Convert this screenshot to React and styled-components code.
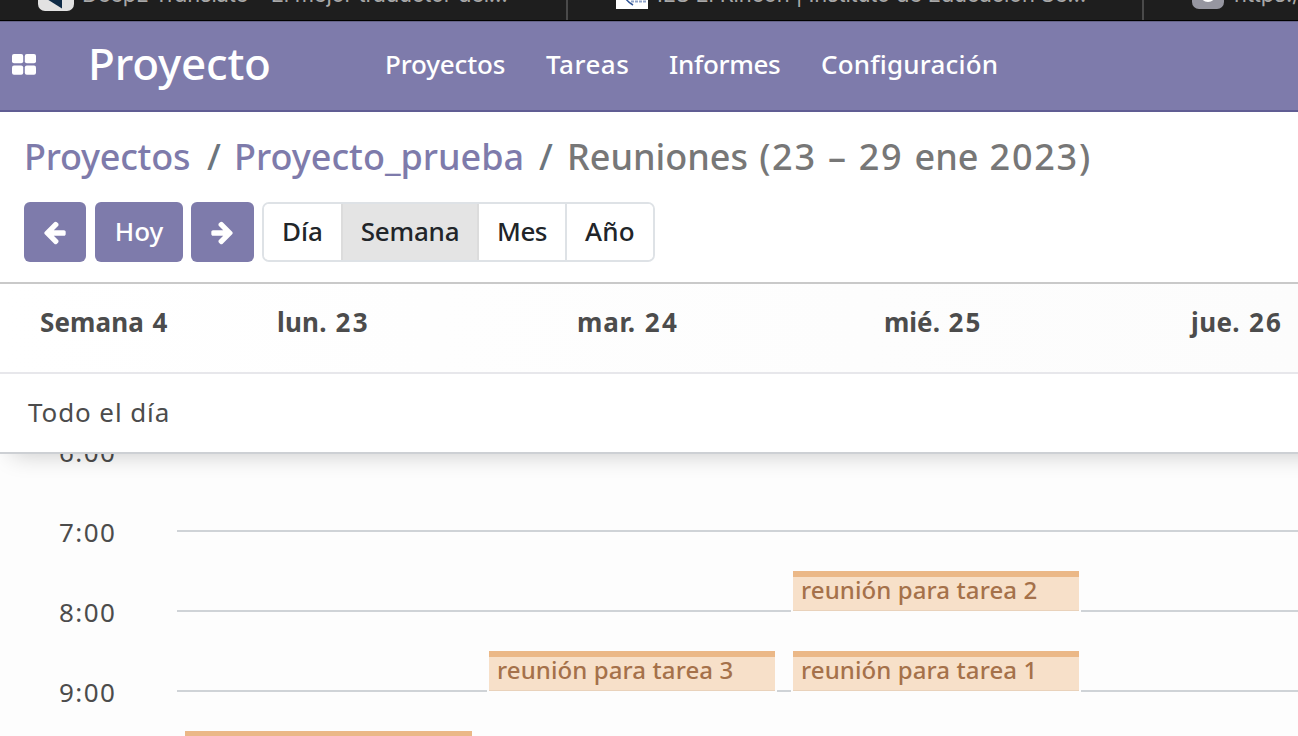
import React from "react";
import styled, { createGlobalStyle } from "styled-components";

const GlobalStyle = createGlobalStyle`
  *, *::before, *::after { box-sizing: border-box; }
  body { margin: 0; background: #fff; overflow: hidden; }
`;

const Screen = styled.div`
  width: 1298px;
  height: 736px;
  overflow: hidden;
  display: flex;
  flex-direction: column;
  background: #fff;
  color: #4c4c4c;
  font-family: "Lucida Grande", "Noto Sans", sans-serif;
  font-size: 26px;
  white-space: nowrap;
`;

const TabStrip = styled.div`
  display: flex;
  flex: none;
  height: 21px;
  background: #1e1e1e;
  border-bottom: 1px solid #000;
  overflow: hidden;
`;

const Tab = styled.div`
  display: flex;
  flex: none;
  align-items: flex-end;
  width: ${(p) => p.$width}px;
  height: 20px;
  padding-left: ${(p) => p.$pad}px;
  border-right: 2px solid #4a4a4a;
  overflow: hidden;
`;

const Favicon = styled.svg`
  flex: none;
  height: 32px;
  margin-bottom: ${(p) => p.$lift}px;
`;

const TabTitle = styled.span`
  margin-left: ${(p) => p.$gap}px;
  margin-bottom: 11px;
  font: 400 22px/30px Inter, sans-serif;
  letter-spacing: ${(p) => p.$track}px;
  color: #a8a8a8;
`;

const Navbar = styled.nav`
  display: flex;
  flex: none;
  align-items: center;
  height: 91px;
  padding-left: 12px;
  background: #7e7bab;
  border-top: 1px solid #66648a;
  border-bottom: 2px solid #605d93;
  color: #fff;
`;

const AppsIcon = styled.svg`
  width: 24px;
  height: 21px;
  margin-top: -4px;
`;

const Brand = styled.span`
  width: 297px;
  margin: -6px 0 0 52px;
  font-size: 44px;
  font-weight: 500;
  line-height: 60px;
  letter-spacing: ${(p) => p.$track}px;
`;

const NavLink = styled.a`
  width: ${(p) => p.$width}px;
  margin-top: -4px;
  font-weight: 500;
  line-height: 36px;
  letter-spacing: ${(p) => p.$track}px;
`;

const ControlPanel = styled.header`
  flex: none;
  height: 172px;
  padding: 20px 24px 0;
  border-bottom: 2px solid #c9c9c9;
`;

const Breadcrumb = styled.div`
  display: flex;
  height: 50px;
  line-height: 50px;
  font-size: 36px;
  font-weight: 500;
`;

const Crumb = styled.span`
  width: ${(p) => p.$width}px;
  letter-spacing: ${(p) => p.$track}px;
  color: ${(p) => p.$color};
`;

const Digits = styled.span`
  letter-spacing: ${(p) => p.$track}px;
`;

const Toolbar = styled.div`
  display: flex;
  height: 60px;
  margin-top: 20px;
`;

const NavButton = styled.button`
  display: flex;
  align-items: center;
  justify-content: center;
  width: ${(p) => p.$width}px;
  height: 60px;
  margin: 0 ${(p) => p.$gap}px 0 0;
  padding: 0 0 2px;
  border: 0;
  border-radius: 6px;
  background: #7e7bab;
  color: #fff;
  font: inherit;
  font-weight: 500;
`;

const ArrowIcon = styled.svg`
  width: 26px;
  height: 26px;
  margin: 3px ${(p) => (p.$flip ? 2 : 0)}px 0 0;
  fill: currentColor;
  transform: ${(p) => (p.$flip ? "scaleX(-1)" : "none")};
`;

const Scale = styled.div`
  display: flex;
  width: 393px;
  border: 2px solid #dee2e6;
  border-radius: 7px;
  overflow: hidden;
`;

const ScaleButton = styled.button`
  width: ${(p) => p.$width}px;
  padding: 0 0 2px;
  border: 0;
  border-right: ${(p) => (p.$last ? 0 : 2)}px solid ${(p) => (p.$active ? "#dcdcdc" : "#dee2e6")};
  background: ${(p) => (p.$active ? "#e4e4e4" : "#fff")};
  box-shadow: ${(p) => (p.$active ? "0 0 0 2px #dcdcdc" : "none")};
  color: #212529;
  font: inherit;
  font-weight: 500;
  letter-spacing: ${(p) => p.$track}px;
`;

const DayHeader = styled.div`
  display: flex;
  flex: none;
  height: 90px;
  padding: 20px 0 0 40px;
  background: linear-gradient(90deg, #fff, #fcfcfc);
  border-bottom: 2px solid #e7e7eb;
  font-weight: 700;
  line-height: 36px;
`;

const DayName = styled.span`
  flex: none;
  width: ${(p) => p.$width}px;
  letter-spacing: ${(p) => p.$track}px;
`;

const AllDay = styled.div`
  position: relative;
  z-index: 1;
  flex: none;
  width: 1360px;
  height: 80px;
  padding: 20px 0 0 28px;
  background: #fff;
  border-bottom: 2px solid #cdd0d4;
  box-shadow: 0 12px 24px -12px rgba(0, 0, 0, 0.22);
  line-height: 36px;
  letter-spacing: 0.9px;
`;

const TimeGrid = styled.div`
  position: relative;
  flex: 1;
  margin-top: -4px;
  background: #fdfdfd;
`;

const Slot = styled.div`
  display: flex;
  height: 80px;
  line-height: 36px;
`;

const SlotTime = styled.span`
  width: 177px;
  padding: 0 0 0 59px;
  margin-top: -16px;
  letter-spacing: 1.4px;
`;

const SlotCell = styled.div`
  flex: 1;
  border-top: 2px solid #cfd3d7;
`;

const Event = styled.div`
  position: absolute;
  left: ${(p) => 185 + p.$day * 304}px;
  top: ${(p) => p.$top}px;
  width: ${(p) => (p.$day ? 286 : 287)}px;
  height: 40px;
  padding-left: 8px;
  background: #f7e0c9;
  border-top: 6px solid #ebb887;
  border-bottom: 1px solid #e9d2bb;
  box-shadow: 0 0 0 2px #fdfdfd;
  color: #a5714a;
  font-size: 24px;
  font-weight: 500;
  line-height: 26px;
  letter-spacing: 0.1px;
`;

const PURPLE = "#7e7bab";
const SLASH = "#6c757d";

function Arrow({ flip }) {
  return (
    <ArrowIcon viewBox="32 64 1792 1792" $flip={flip}>
      <path d="M1664 896v128q0 53-32.5 90.5t-84.5 37.5h-704l293 294q38 36 38 90t-38 90l-75 76q-37 37-90 37-52 0-91-37l-651-652q-37-37-37-90 0-52 37-91l651-650q38-38 91-38 52 0 90 38l75 74q38 38 38 91t-38 91l-293 293h704q52 0 84.5 37.5t32.5 90.5z" />
    </ArrowIcon>
  );
}

export default function App() {
  return (
    <Screen>
      <GlobalStyle />
      <TabStrip>
        <Tab $width={568} $pad={38}>
          <Favicon width="36" viewBox="0 0 36 32" $lift={9}>
            <rect width="36" height="32" rx="7" fill="#e2e2e2" />
            <path d="M4 17 L24 29.5 L24 8 Z" fill="#0f2b46" />
          </Favicon>
          <TabTitle $gap={8} $track={-0.22}>DeepL Translate – El mejor traductor del…</TabTitle>
        </Tab>
        <Tab $width={576} $pad={48}>
          <Favicon width="32" viewBox="0 0 32 32" $lift={11}>
            <rect width="32" height="32" fill="#fff" />
            <path d="M10 22 Q12 25 17 28" fill="none" stroke="#2f5496" strokeWidth="1.5" />
            <path d="M15 24.5H31" stroke="#8fa3c8" strokeWidth="2" strokeDasharray="3 1" />
          </Favicon>
          <TabTitle $gap={9} $track={-0.22}>IES El Rincón | Instituto de Educación Se…</TabTitle>
        </Tab>
        <Tab $width={200} $pad={48}>
          <Favicon width="32" viewBox="0 0 32 32" $lift={11}>
            <rect width="32" height="32" rx="7" fill="#9696a0" />
            <circle cx="16" cy="17" r="8" fill="#fff" />
          </Favicon>
          <TabTitle $gap={10} $track={0}>https://</TabTitle>
        </Tab>
      </TabStrip>

      <Navbar>
        <AppsIcon viewBox="0 0 24 21" fill="#fff">
          <rect width="11.2" height="9.3" rx="2" />
          <rect x="12.8" width="11.2" height="9.3" rx="2" />
          <rect y="11.5" width="11.2" height="9.3" rx="2" />
          <rect x="12.8" y="11.5" width="11.2" height="9.3" rx="2" />
        </AppsIcon>
        <Brand $track={-0.2}>Proyecto</Brand>
        <NavLink $width={161} $track={-0.15}>Proyectos</NavLink>
        <NavLink $width={123} $track={0.5}>Tareas</NavLink>
        <NavLink $width={152} $track={-0.3}>Informes</NavLink>
        <NavLink $width={200} $track={0.2}>Configuración</NavLink>
      </Navbar>

      <ControlPanel>
        <Breadcrumb>
          <Crumb $width={183} $track={-0.25} $color={PURPLE}>Proyectos</Crumb>
          <Crumb $width={27} $track={0} $color={SLASH}>/</Crumb>
          <Crumb $width={305} $track={0} $color={PURPLE}>Proyecto_prueba</Crumb>
          <Crumb $width={28} $track={0} $color={SLASH}>/</Crumb>
          <Crumb $width={540} $track={0} $color="#777">
            Reuniones<Digits $track={1.75}> (23 – 29 </Digits>ene<Digits $track={1.75}> 2023)</Digits>
          </Crumb>
        </Breadcrumb>
        <Toolbar>
          <NavButton $width={62} $gap={9}><Arrow /></NavButton>
          <NavButton $width={88} $gap={8}>Hoy</NavButton>
          <NavButton $width={63} $gap={8}><Arrow flip /></NavButton>
          <Scale>
            <ScaleButton $width={79} $track={0}>Día</ScaleButton>
            <ScaleButton $width={136} $track={-0.2} $active>Semana</ScaleButton>
            <ScaleButton $width={88} $track={-0.5}>Mes</ScaleButton>
            <ScaleButton $width={86} $track={0.3} $last>Año</ScaleButton>
          </Scale>
        </Toolbar>
      </ControlPanel>

      <DayHeader>
        <DayName $width={237} $track={0.1}>Semana<Digits $track={2}> 4</Digits></DayName>
        <DayName $width={300} $track={0.2}>lun.<Digits $track={2.2}> 23</Digits></DayName>
        <DayName $width={307} $track={0.8}>mar.<Digits $track={2.2}> 24</Digits></DayName>
        <DayName $width={307} $track={0}>mié.<Digits $track={1.9}> 25</Digits></DayName>
        <DayName $width={107} $track={0.4}>jue.<Digits $track={2.2}> 26</Digits></DayName>
      </DayHeader>
      <AllDay>Todo el día</AllDay>
      <TimeGrid>
        {["6:00", "7:00", "8:00", "9:00"].map((time) => (
          <Slot key={time}>
            <SlotTime>{time}</SlotTime>
            <SlotCell />
          </Slot>
        ))}
        <Event $day={2} $top={121}>reunión para tarea 2</Event>
        <Event $day={1} $top={201}>reunión para tarea 3</Event>
        <Event $day={2} $top={201}>reunión para tarea 1</Event>
        <Event $day={0} $top={281} />
      </TimeGrid>
    </Screen>
  );
}
